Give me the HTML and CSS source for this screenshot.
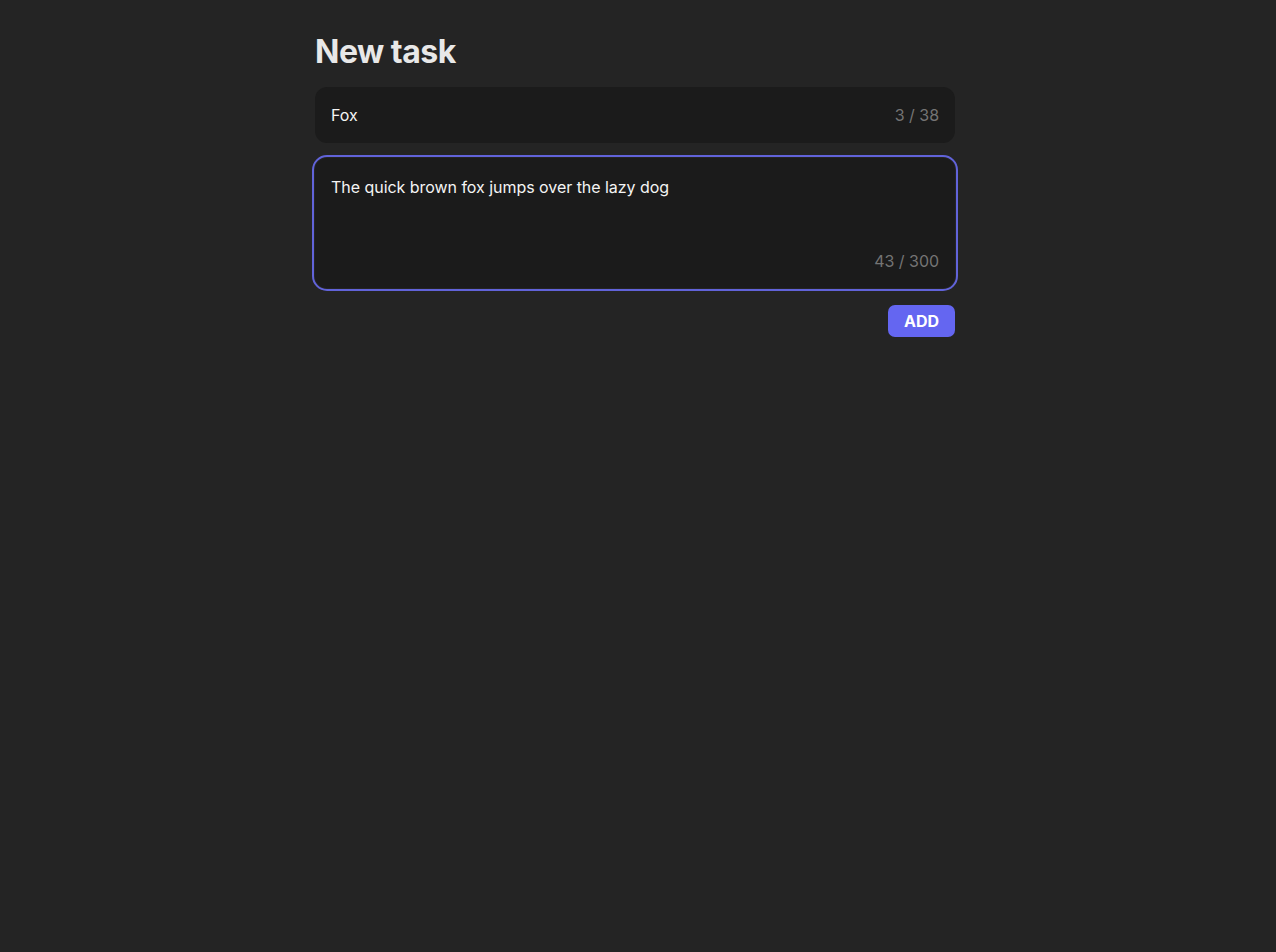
FILE: index.html
```html
<!DOCTYPE html>
<html lang="en">
<head>
<meta charset="utf-8">
<title>New task</title>
<link rel="stylesheet" href="styles.css">
</head>
<body>
<div class="page">
  <main class="form">
    <h1 class="title">New task</h1>
    <div class="field field-input">
      <span class="value">Fox</span>
      <span class="count">3 / 38</span>
    </div>
    <div class="field field-area">
      <div class="value">The quick brown fox jumps over the lazy dog</div>
      <div class="count">43 / 300</div>
    </div>
    <div class="actions">
      <button class="btn">ADD</button>
    </div>
  </main>
</div>
</body>
</html>
```
FILE: styles.css
```css
html, body {
  margin: 0;
  padding: 0;
  background: #242424;
  font-family: Inter, "Noto Sans", sans-serif;
  color: #ffffff;
}
.page {
  display: flex;
  justify-content: center;
  padding: 32px 6px 0 0;
}
.form {
  width: 640px;
  display: flex;
  flex-direction: column;
}
.title {
  margin: 0 0 15px;
  font-size: 32px;
  line-height: 40px;
  font-weight: 700;
  color: #e8e8e8;
  letter-spacing: -0.5px;
}
.field {
  background: #1b1b1b;
  border-radius: 12px;
  box-sizing: border-box;
  font-size: 16px;
  line-height: 24px;
  letter-spacing: -0.04px;
}
.field-input {
  height: 56px;
  padding: 0 16px;
  display: flex;
  align-items: center;
  justify-content: space-between;
}
.field-area {
  margin-top: 15px;
  height: 130px;
  padding: 17px 16px 15px;
  display: flex;
  flex-direction: column;
  justify-content: space-between;
  outline: 2px solid #6163d9;
  outline-offset: 1px;
}
.value {
  color: #f4f4f4;
}
.count {
  color: #747474;
  text-align: right;
}
.actions {
  margin-top: 17px;
  display: flex;
  justify-content: flex-end;
}
.btn {
  width: 67px;
  height: 32px;
  border: none;
  border-radius: 7px;
  background: #6466f1;
  color: #ffffff;
  font-family: Inter, "Noto Sans", sans-serif;
  font-size: 16px;
  font-weight: 700;
  padding: 0;
}
```
